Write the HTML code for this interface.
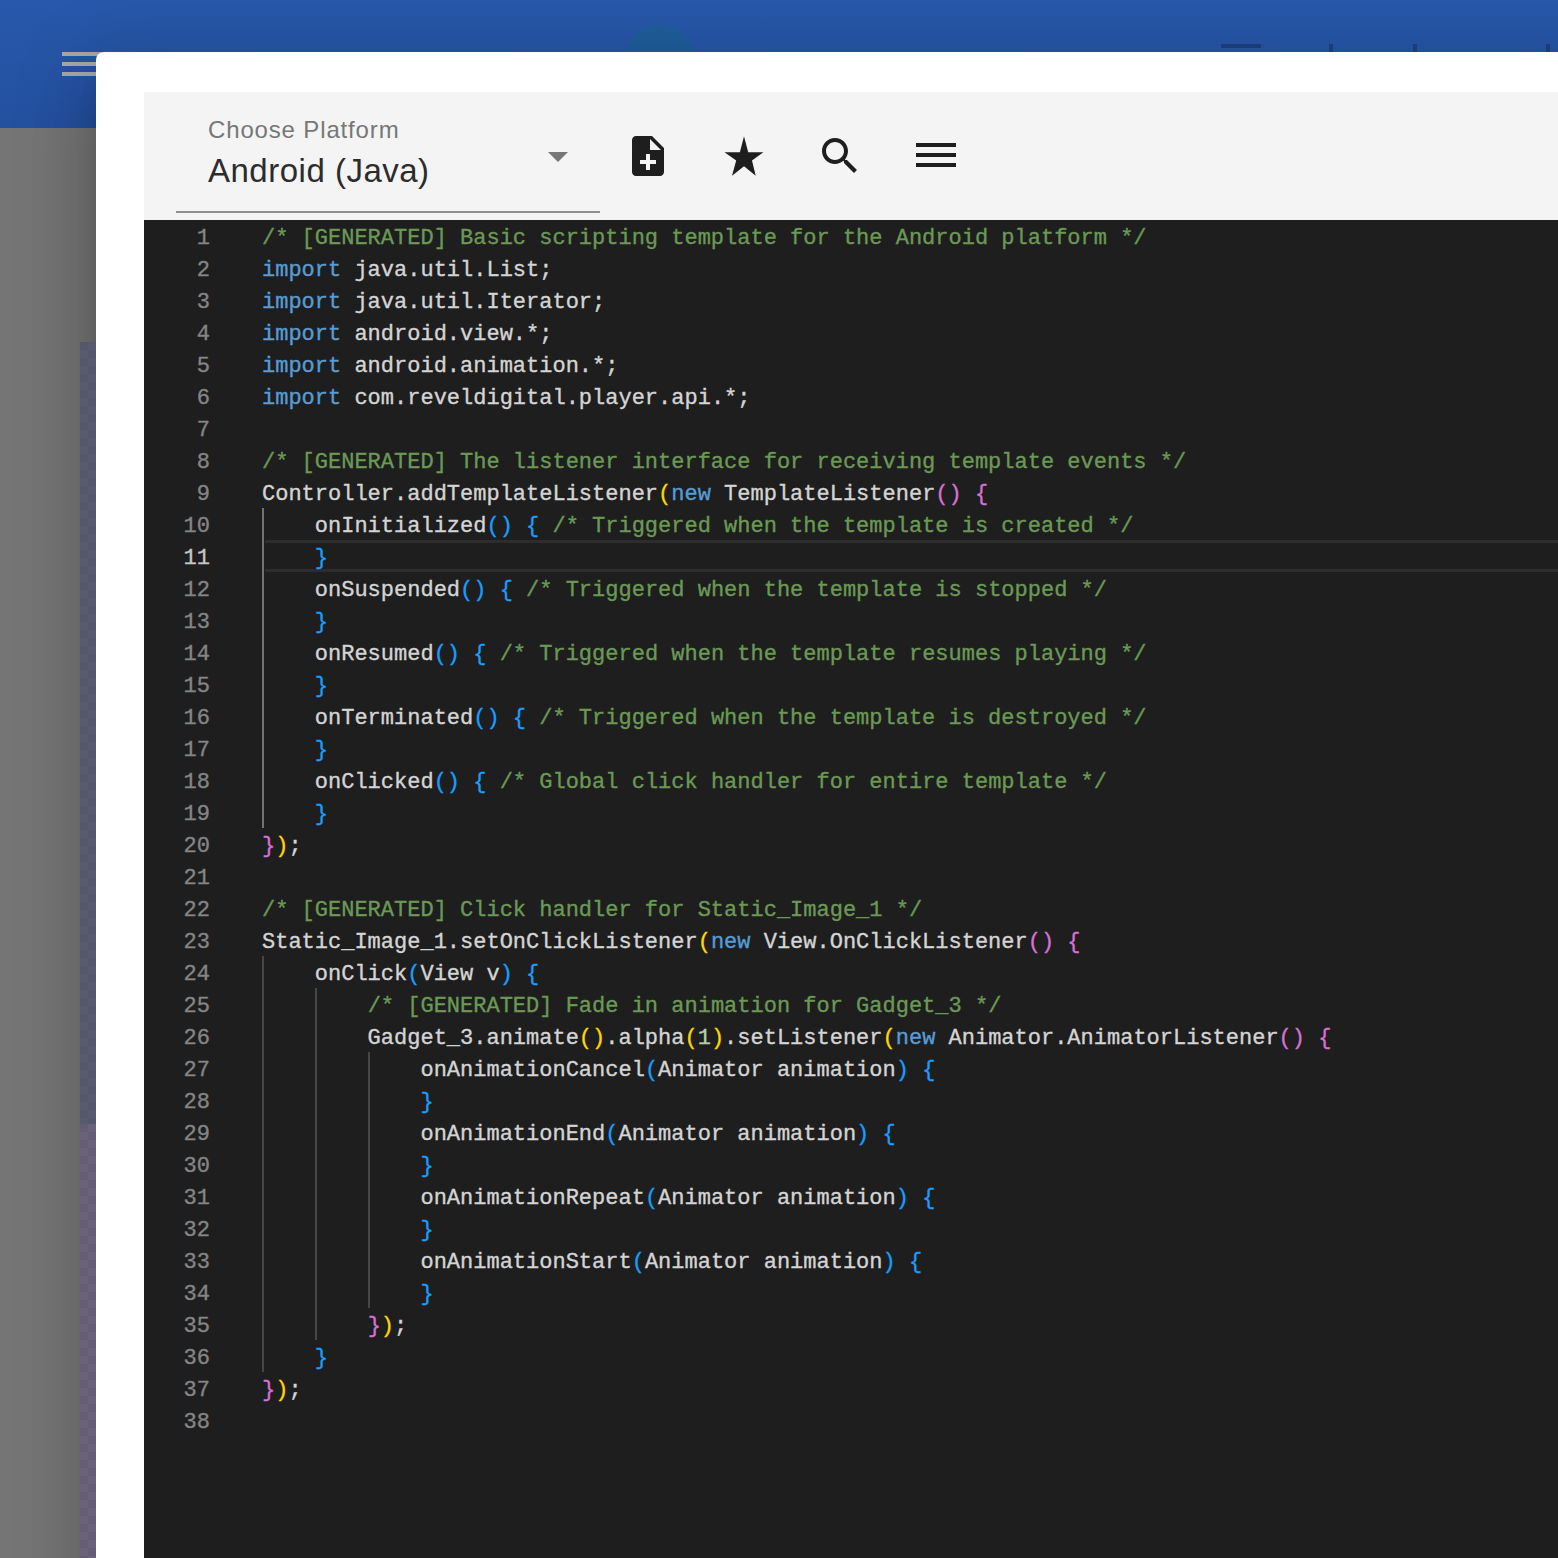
<!DOCTYPE html>
<html>
<head>
<meta charset="utf-8">
<style>
html,body{margin:0;padding:0;width:1558px;height:1558px;overflow:hidden;background:#6a6a6a;}
body{position:relative;font-family:"Liberation Sans",sans-serif;}
.abs{position:absolute;}
#hdr{left:0;top:0;width:1558px;height:128px;background:linear-gradient(180deg,#2858ab 0%,#2450a0 100%);}
#ham div{position:absolute;left:62px;width:40px;height:4px;background:#a9a9a9;}
#circ{left:624px;top:24px;width:72px;height:72px;border-radius:50%;background:#1f5d9c;}
.mk{position:absolute;background:#1d4283;}
#gray{left:0;top:128px;width:1558px;height:1430px;background:#757575;}
#strip1{left:80px;top:342px;width:16px;height:782px;background-color:#53566c;background-image:linear-gradient(45deg,#585b70 25%,transparent 25%,transparent 75%,#585b70 75%),linear-gradient(45deg,#585b70 25%,transparent 25%,transparent 75%,#585b70 75%);background-size:16px 16px;background-position:0 0,8px 8px;}
#strip2{left:80px;top:1124px;width:16px;height:434px;background-color:#645b74;background-image:linear-gradient(45deg,#6a617a 25%,transparent 25%,transparent 75%,#6a617a 75%),linear-gradient(45deg,#6a617a 25%,transparent 25%,transparent 75%,#6a617a 75%);background-size:16px 16px;background-position:0 0,8px 8px;}
#dlg{left:96px;top:52px;width:1600px;height:1600px;background:#fff;border-top-left-radius:8px;box-shadow:0 19px 26px -12px rgba(0,0,0,.2),0 41px 65px 5px rgba(0,0,0,.14),0 15px 78px 14px rgba(0,0,0,.12);}
#tb{left:144px;top:92px;width:1500px;height:128px;background:#f4f4f4;}
#lbl{left:208px;top:116px;font-size:24px;letter-spacing:0.85px;color:#777;white-space:nowrap;}
#val{left:208px;top:152px;font-size:33px;letter-spacing:0.5px;color:#2c2c2c;white-space:nowrap;}
#uline{left:176px;top:211px;width:424px;height:2px;background:#8e8e8e;}
#caret{left:548px;top:152px;width:0;height:0;border-left:10px solid transparent;border-right:10px solid transparent;border-top:10px solid #777;}
svg.ic{position:absolute;width:48px;height:48px;}
#ed{left:144px;top:220px;width:1500px;height:1400px;background:#1e1e1e;}
.hl{left:265px;top:540px;width:1400px;height:26px;border-top:3px solid #2d2d2d;border-bottom:3px solid #2d2d2d;}
.ln{position:absolute;left:262px;height:32px;line-height:32px;padding-top:3px;font-family:"Liberation Mono",monospace;font-size:22px;color:#d4d4d4;white-space:pre;-webkit-text-stroke:0.35px;}
.num{position:absolute;left:150px;width:60px;text-align:right;height:32px;line-height:32px;padding-top:3px;font-family:"Liberation Mono",monospace;font-size:22px;color:#858585;white-space:pre;-webkit-text-stroke:0.35px;}
.num.act{color:#c6c6c6;}
.c{color:#6a9955;}
.k{color:#569cd6;}
.n{color:#b5cea8;}
.g{color:#ffd700;}
.o{color:#da70d6;}
.b{color:#179fff;}
.gd{position:absolute;width:2px;background:#474747;}
.gd.ga{background:#727272;}
</style>
</head>
<body>
<div id="hdr" class="abs"></div>
<div id="ham"><div style="top:52px"></div><div style="top:62px"></div><div style="top:72px"></div></div>
<div id="circ" class="abs"></div>
<div class="mk" style="left:1221px;top:44px;width:40px;height:4px"></div>
<div class="mk" style="left:1329px;top:44px;width:4px;height:8px"></div>
<div class="mk" style="left:1413px;top:44px;width:4px;height:8px"></div>
<div class="mk" style="left:1546px;top:44px;width:4px;height:8px"></div>
<div id="gray" class="abs"></div>
<div id="dlg" class="abs"></div>
<div id="strip1" class="abs"></div>
<div id="strip2" class="abs"></div>
<div id="tb" class="abs"></div>
<div id="lbl" class="abs">Choose Platform</div>
<div id="val" class="abs">Android (Java)</div>
<div id="uline" class="abs"></div>
<div id="caret" class="abs"></div>
<svg class="ic" style="left:624px;top:132px" viewBox="0 0 24 24"><path fill="#1e1e1e" d="M14 2H6c-1.1 0-1.99.9-1.99 2L4 20c0 1.1.89 2 1.99 2H18c1.1 0 2-.9 2-2V8l-6-6zm2 14h-3v3h-2v-3H8v-2h3v-3h2v3h3v2zm-3-7V3.5L18.5 9H13z"/></svg>
<svg class="abs" style="left:718px;top:130px;width:52px;height:52px" viewBox="718 130 52 52"><polygon fill="#1e1e1e" points="744,136.3 748.2,152.2 763.4,152.2 752,160.4 755.7,175.7 744,166.2 732,175.7 736.2,160.4 724.5,152.2 739.9,152.2"/></svg>
<svg class="ic" style="left:816px;top:132px" viewBox="0 0 24 24"><path fill="#1e1e1e" d="M15.5 14h-.79l-.28-.27C15.41 12.59 16 11.11 16 9.5 16 5.91 13.09 3 9.5 3S3 5.91 3 9.5 5.91 16 9.5 16c1.61 0 3.09-.59 4.23-1.57l.27.28v.79l5 4.99L20.49 19l-4.99-5zm-6 0C7.01 14 5 11.990 5 9.5S7.01 5 9.5 5 14 7.01 14 9.5 11.99 14 9.5 14z"/></svg>
<div class="abs" style="left:916px;top:143px;width:40px;height:4px;background:#1e1e1e"></div>
<div class="abs" style="left:916px;top:153px;width:40px;height:4px;background:#1e1e1e"></div>
<div class="abs" style="left:916px;top:163px;width:40px;height:4px;background:#1e1e1e"></div>
<div id="ed" class="abs"></div>
<div class="hl abs"></div>
<div class="gd ga" style="left:262.0px;top:508px;height:320px"></div>
<div class="gd" style="left:262.0px;top:956px;height:416px"></div>
<div class="gd" style="left:314.8px;top:988px;height:352px"></div>
<div class="gd" style="left:367.5px;top:1052px;height:256px"></div>
<div class="num" style="top:220px">1</div>
<div class="num" style="top:252px">2</div>
<div class="num" style="top:284px">3</div>
<div class="num" style="top:316px">4</div>
<div class="num" style="top:348px">5</div>
<div class="num" style="top:380px">6</div>
<div class="num" style="top:412px">7</div>
<div class="num" style="top:444px">8</div>
<div class="num" style="top:476px">9</div>
<div class="num" style="top:508px">10</div>
<div class="num act" style="top:540px">11</div>
<div class="num" style="top:572px">12</div>
<div class="num" style="top:604px">13</div>
<div class="num" style="top:636px">14</div>
<div class="num" style="top:668px">15</div>
<div class="num" style="top:700px">16</div>
<div class="num" style="top:732px">17</div>
<div class="num" style="top:764px">18</div>
<div class="num" style="top:796px">19</div>
<div class="num" style="top:828px">20</div>
<div class="num" style="top:860px">21</div>
<div class="num" style="top:892px">22</div>
<div class="num" style="top:924px">23</div>
<div class="num" style="top:956px">24</div>
<div class="num" style="top:988px">25</div>
<div class="num" style="top:1020px">26</div>
<div class="num" style="top:1052px">27</div>
<div class="num" style="top:1084px">28</div>
<div class="num" style="top:1116px">29</div>
<div class="num" style="top:1148px">30</div>
<div class="num" style="top:1180px">31</div>
<div class="num" style="top:1212px">32</div>
<div class="num" style="top:1244px">33</div>
<div class="num" style="top:1276px">34</div>
<div class="num" style="top:1308px">35</div>
<div class="num" style="top:1340px">36</div>
<div class="num" style="top:1372px">37</div>
<div class="num" style="top:1404px">38</div>
<div class="ln" style="top:220px"><span class="c">/* [GENERATED] Basic scripting template for the Android platform */</span></div>
<div class="ln" style="top:252px"><span class="k">import</span> java.util.List;</div>
<div class="ln" style="top:284px"><span class="k">import</span> java.util.Iterator;</div>
<div class="ln" style="top:316px"><span class="k">import</span> android.view.*;</div>
<div class="ln" style="top:348px"><span class="k">import</span> android.animation.*;</div>
<div class="ln" style="top:380px"><span class="k">import</span> com.reveldigital.player.api.*;</div>
<div class="ln" style="top:412px"></div>
<div class="ln" style="top:444px"><span class="c">/* [GENERATED] The listener interface for receiving template events */</span></div>
<div class="ln" style="top:476px">Controller.addTemplateListener<span class="g">(</span><span class="k">new</span> TemplateListener<span class="o">()</span> <span class="o">{</span></div>
<div class="ln" style="top:508px">    onInitialized<span class="b">()</span> <span class="b">{</span> <span class="c">/* Triggered when the template is created */</span></div>
<div class="ln" style="top:540px">    <span class="b">}</span></div>
<div class="ln" style="top:572px">    onSuspended<span class="b">()</span> <span class="b">{</span> <span class="c">/* Triggered when the template is stopped */</span></div>
<div class="ln" style="top:604px">    <span class="b">}</span></div>
<div class="ln" style="top:636px">    onResumed<span class="b">()</span> <span class="b">{</span> <span class="c">/* Triggered when the template resumes playing */</span></div>
<div class="ln" style="top:668px">    <span class="b">}</span></div>
<div class="ln" style="top:700px">    onTerminated<span class="b">()</span> <span class="b">{</span> <span class="c">/* Triggered when the template is destroyed */</span></div>
<div class="ln" style="top:732px">    <span class="b">}</span></div>
<div class="ln" style="top:764px">    onClicked<span class="b">()</span> <span class="b">{</span> <span class="c">/* Global click handler for entire template */</span></div>
<div class="ln" style="top:796px">    <span class="b">}</span></div>
<div class="ln" style="top:828px"><span class="o">}</span><span class="g">)</span>;</div>
<div class="ln" style="top:860px"></div>
<div class="ln" style="top:892px"><span class="c">/* [GENERATED] Click handler for Static_Image_1 */</span></div>
<div class="ln" style="top:924px">Static_Image_1.setOnClickListener<span class="g">(</span><span class="k">new</span> View.OnClickListener<span class="o">()</span> <span class="o">{</span></div>
<div class="ln" style="top:956px">    onClick<span class="b">(</span>View v<span class="b">)</span> <span class="b">{</span></div>
<div class="ln" style="top:988px">        <span class="c">/* [GENERATED] Fade in animation for Gadget_3 */</span></div>
<div class="ln" style="top:1020px">        Gadget_3.animate<span class="g">()</span>.alpha<span class="g">(</span><span class="n">1</span><span class="g">)</span>.setListener<span class="g">(</span><span class="k">new</span> Animator.AnimatorListener<span class="o">()</span> <span class="o">{</span></div>
<div class="ln" style="top:1052px">            onAnimationCancel<span class="b">(</span>Animator animation<span class="b">)</span> <span class="b">{</span></div>
<div class="ln" style="top:1084px">            <span class="b">}</span></div>
<div class="ln" style="top:1116px">            onAnimationEnd<span class="b">(</span>Animator animation<span class="b">)</span> <span class="b">{</span></div>
<div class="ln" style="top:1148px">            <span class="b">}</span></div>
<div class="ln" style="top:1180px">            onAnimationRepeat<span class="b">(</span>Animator animation<span class="b">)</span> <span class="b">{</span></div>
<div class="ln" style="top:1212px">            <span class="b">}</span></div>
<div class="ln" style="top:1244px">            onAnimationStart<span class="b">(</span>Animator animation<span class="b">)</span> <span class="b">{</span></div>
<div class="ln" style="top:1276px">            <span class="b">}</span></div>
<div class="ln" style="top:1308px">        <span class="o">}</span><span class="g">)</span>;</div>
<div class="ln" style="top:1340px">    <span class="b">}</span></div>
<div class="ln" style="top:1372px"><span class="o">}</span><span class="g">)</span>;</div>
<div class="ln" style="top:1404px"></div>
</body>
</html>
